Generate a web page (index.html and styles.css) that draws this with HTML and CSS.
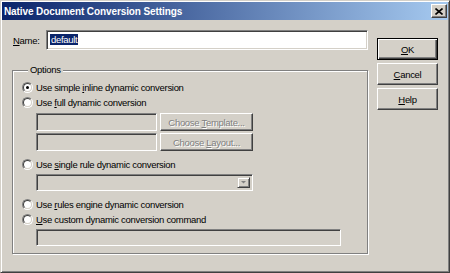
FILE: index.html
```html
<!DOCTYPE html>
<html lang="en">
<head>
  <meta charset="UTF-8" />
  <title>Native Document Conversion Settings</title>
  <link rel="stylesheet" href="styles.css">
</head>
<body>

<div class="window">

  <!-- Title bar -->
  <div class="titlebar">
    <span class="title">Native Document Conversion Settings</span>
    <span class="close-btn">
      <svg width="8" height="7" viewBox="0 0 8 7"><path d="M0.5 0.5 L7.5 6.5 M7.5 0.5 L0.5 6.5" stroke="#000" stroke-width="1.6" fill="none"/></svg>
    </span>
  </div>

  <div class="dialog">
    <div class="main">

      <div class="name-row">
        <span class="name-label"><u>N</u>ame:</span>
        <div class="field name-field"><span class="selected">default</span></div>
      </div>

      <fieldset class="options">
        <legend>Options</legend>

        <div class="radio-row">
          <span class="radio checked"><span class="radio-in"></span></span>
          <span>Use simple <u>i</u>nline dynamic conversion</span>
        </div>

        <div class="radio-row">
          <span class="radio"><span class="radio-in"></span></span>
          <span>Use <u>f</u>ull dynamic conversion</span>
        </div>

        <div class="sub-row first">
          <div class="field small-field"></div>
          <span class="btn disabled choose"><span>Choose <u>T</u>emplate...</span></span>
        </div>
        <div class="sub-row">
          <div class="field small-field"></div>
          <span class="btn disabled choose"><span>Choose <u>L</u>ayout...</span></span>
        </div>

        <div class="radio-row spaced">
          <span class="radio"><span class="radio-in"></span></span>
          <span>Use <u>s</u>ingle rule dynamic conversion</span>
        </div>

        <div class="sub-row">
          <div class="field combo">
            <span class="combo-arrow">
              <svg width="7" height="5" viewBox="0 0 7 5"><path d="M1 1 L6 1 L3.5 3.5 Z" fill="#808080"/></svg>
            </span>
          </div>
        </div>

        <div class="radio-row spaced">
          <span class="radio"><span class="radio-in"></span></span>
          <span>Use <u>r</u>ules engine dynamic conversion</span>
        </div>

        <div class="radio-row">
          <span class="radio"><span class="radio-in"></span></span>
          <span><u>U</u>se custom dynamic conversion command</span>
        </div>

        <div class="sub-row">
          <div class="field wide-field"></div>
        </div>
      </fieldset>

    </div>

    <div class="buttons">
      <span class="btn default"><span><u>O</u>K</span></span>
      <span class="btn"><span><u>C</u>ancel</span></span>
      <span class="btn"><span><u>H</u>elp</span></span>
    </div>
  </div>

</div>

</body>
</html>
```

FILE: styles.css
```css
body {
  margin: 0;
  font-family: 'Liberation Sans', Arial, sans-serif;
  font-size: 9.5px;
  letter-spacing: -0.3px;
  color: #000;
  background: #d4d0c8;
}

u {
  text-decoration: underline;
  text-underline-offset: 1px;
}

.window {
  width: 450px;
  height: 273px;
  box-sizing: border-box;
  background: #d4d0c8;
  border: 1px solid;
  border-color: #d4d0c8 #404040 #404040 #d4d0c8;
  box-shadow: inset 1px 1px 0 #fff, inset -1px -1px 0 #808080;
  padding: 1px;
}

/* Title bar */
.titlebar {
  height: 18px;
  display: flex;
  align-items: center;
  justify-content: space-between;
  padding-left: 2px;
  background: linear-gradient(to right, #0a246a, #a6caf0);
}

.title {
  color: #fff;
  font-weight: bold;
  font-size: 10px;
  letter-spacing: -0.1px;
}

.close-btn {
  width: 16px;
  height: 14px;
  box-sizing: border-box;
  margin-right: 1px;
  display: flex;
  align-items: center;
  justify-content: center;
  background: #d4d0c8;
  border: 1px solid;
  border-color: #fff #404040 #404040 #fff;
  box-shadow: inset -1px -1px 0 #808080;
}

/* Dialog body */
.dialog {
  display: flex;
  padding: 10px 0 0 10px;
}

.main {
  width: 356px;
}

.name-row {
  display: flex;
  align-items: center;
  height: 20px;
}

.name-label {
  width: 33px;
  padding-left: 1px;
}

.field {
  box-sizing: border-box;
  border: 1px solid;
  border-color: #808080 #fff #fff #808080;
  box-shadow: inset 1px 1px 0 #404040, inset -1px -1px 0 #d4d0c8;
  background: #d4d0c8;
}

.name-field {
  width: 322px;
  height: 20px;
  background: #fff;
  padding: 3px 0 0 3px;
  line-height: 12px;
}

.selected {
  background: #0a246a;
  color: #fff;
  padding: 0 1px;
}

/* Options group */
.options {
  margin: 14px 0 0 0;
  padding: 4px 0 9px 9px;
  height: 190px;
  box-sizing: border-box;
  border: 1px solid #808080;
  box-shadow: inset 1px 1px 0 #fff, 1px 1px 0 #fff;
  min-width: 0;
}

.options legend {
  margin-left: 6px;
  padding: 0 2px;
  line-height: 12px;
  background: #d4d0c8;
}

.radio-row {
  display: flex;
  align-items: center;
  height: 15px;
}

.radio-row.spaced {
  margin-top: 6px;
}

.radio {
  width: 11px;
  height: 11px;
  box-sizing: border-box;
  border-radius: 50%;
  border: 1px solid;
  border-color: #808080 #fff #fff #808080;
  margin-right: 3px;
  flex-shrink: 0;
}

.radio-in {
  display: block;
  width: 9px;
  height: 9px;
  box-sizing: border-box;
  border-radius: 50%;
  border: 1px solid;
  border-color: #404040 #d4d0c8 #d4d0c8 #404040;
  background: #fff;
  position: relative;
}

.radio.checked .radio-in::after {
  content: "";
  position: absolute;
  left: 2px;
  top: 2px;
  width: 3px;
  height: 3px;
  border-radius: 50%;
  background: #000;
}

.sub-row {
  display: flex;
  gap: 3px;
  margin: 2px 0 0 14px;
}

.sub-row.first {
  margin-top: 3px;
}

.small-field {
  width: 121px;
  height: 18px;
}

.combo {
  width: 217px;
  height: 17px;
  display: flex;
  justify-content: flex-end;
  padding: 2px;
}

.combo-arrow {
  width: 13px;
  box-sizing: border-box;
  display: flex;
  align-items: center;
  justify-content: center;
  border: 1px solid;
  border-color: #d4d0c8 #404040 #404040 #d4d0c8;
  box-shadow: inset 1px 1px 0 #fff, inset -1px -1px 0 #808080;
}

.wide-field {
  width: 305px;
  height: 17px;
}

/* Push buttons */
.btn {
  display: flex;
  align-items: center;
  justify-content: center;
  box-sizing: border-box;
  border: 1px solid;
  border-color: #fff #404040 #404040 #fff;
  box-shadow: inset -1px -1px 0 #808080;
  background: #d4d0c8;
}

.btn.disabled {
  color: #808080;
  text-shadow: 1px 1px 0 #fff;
}

.choose {
  width: 93px;
  height: 18px;
}

.buttons {
  display: flex;
  flex-direction: column;
  gap: 3px;
  margin: 8px 0 0 9px;
}

.buttons .btn {
  width: 61px;
  height: 22px;
}

.btn.default {
  border: 1px solid #000;
  box-shadow: inset 1px 1px 0 #fff, inset -1px -1px 0 #404040, inset -2px -2px 0 #808080;
}
```
